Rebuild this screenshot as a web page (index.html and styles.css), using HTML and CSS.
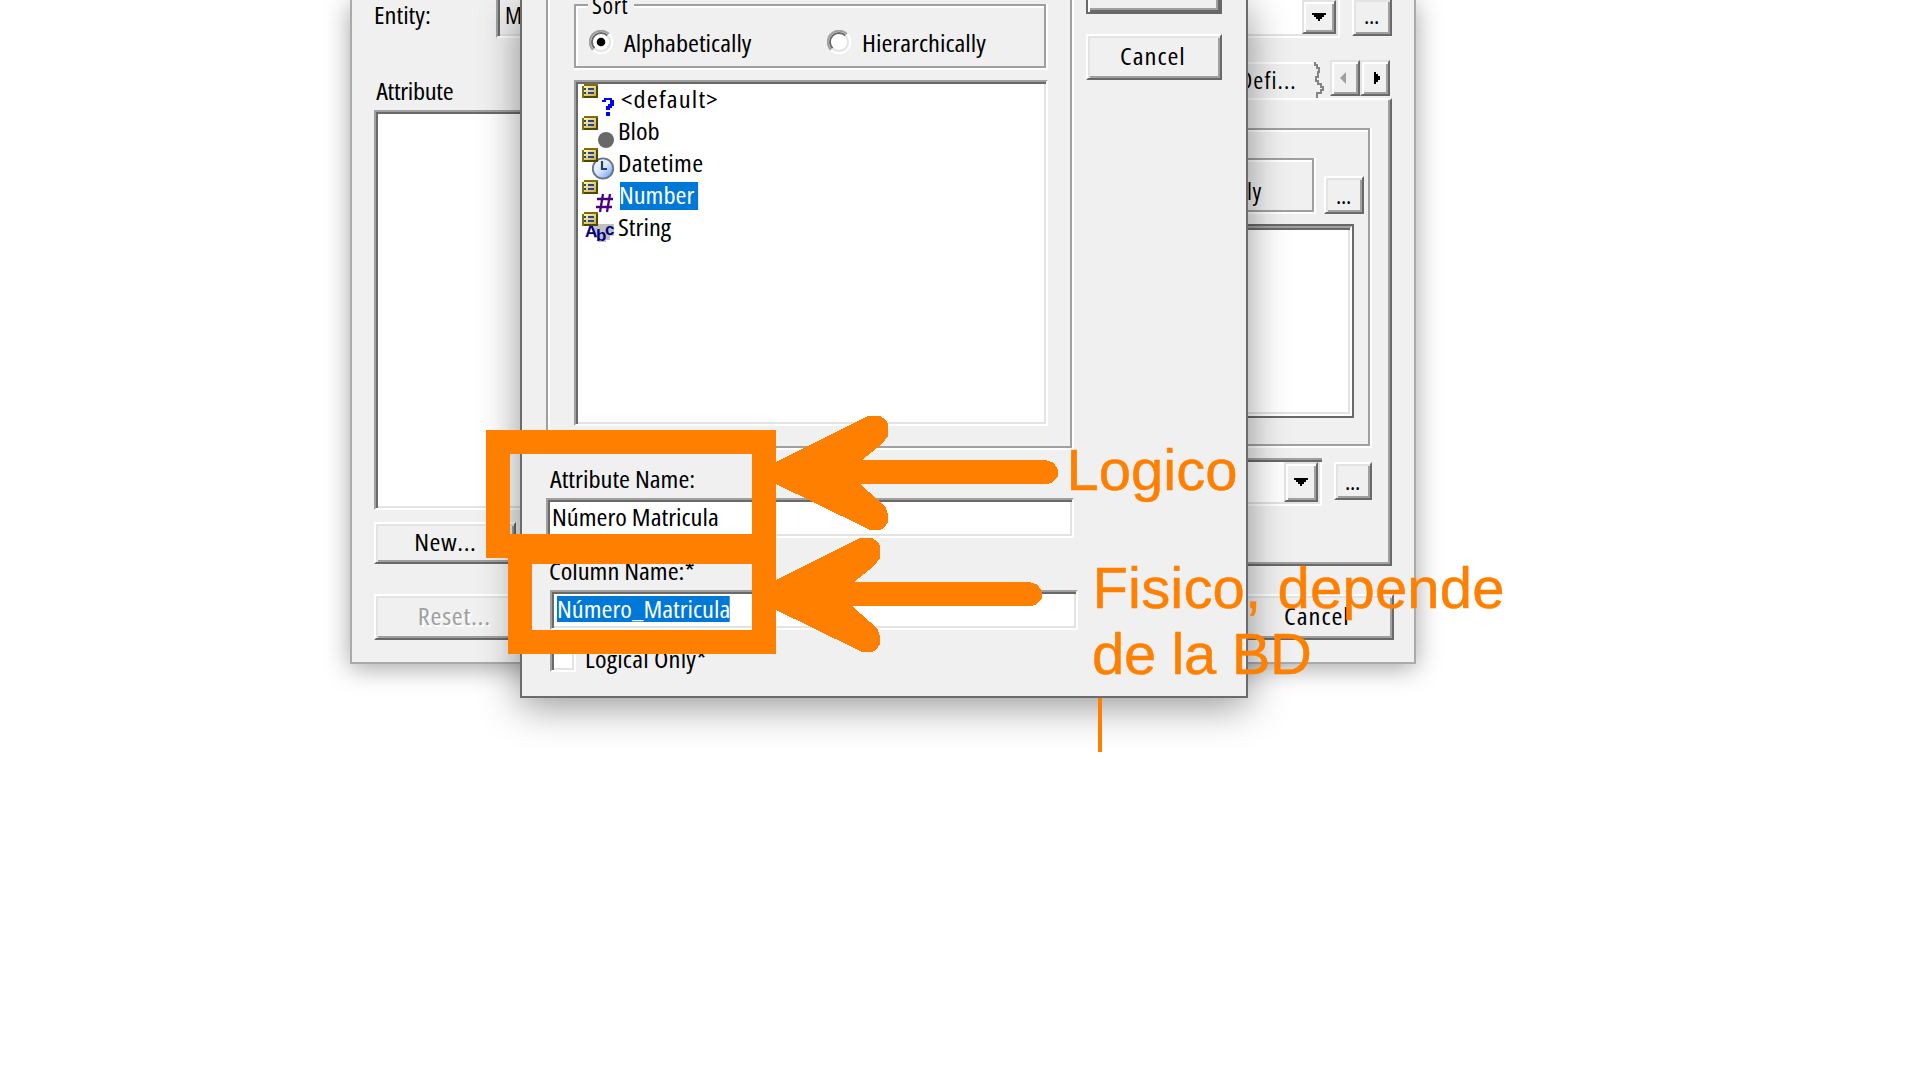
FILE: index.html
```html
<!DOCTYPE html>
<html lang="en">
<head>
<meta charset="utf-8">
<title>Attribute dialog</title>
<link rel="stylesheet" href="styles.css">
</head>
<body>
<svg class="defs" width="0" height="0">
  <defs>
    <linearGradient id="tag" x1="0" y1="0" x2="1" y2="1"><stop offset="0" stop-color="#fff8c0"/><stop offset="1" stop-color="#c8b040"/></linearGradient>
    <linearGradient id="glass" x1="0" y1="0" x2="1" y2="1"><stop offset="0" stop-color="#ffffff"/><stop offset=".5" stop-color="#d8e6fa"/><stop offset="1" stop-color="#5b92ee"/></linearGradient>
    <symbol id="domain" viewBox="0 0 16 14">
      <path d="M2 0H16V14H0V2H2Z" fill="#807000"/><path d="M14 2H16V14H2V12H14Z" fill="#504800"/>
      <rect x="2" y="2" width="12" height="10" fill="url(#tag)"/>
      <path d="M2 4h2v2H2zM6 4h6v2H6zM2 8h2v2H2zM6 8h6v2H6z" fill="#2840a8"/>
    </symbol>
  </defs>
</svg>

<div class="desktop">
  <section class="window entity-window">
    <div class="left-column">
      <div class="entity-row"><label>Entity:</label><div class="entity-field">M</div></div>
      <label class="attribute-label">Attribute</label>
      <div class="sunken attribute-list"></div>
      <button class="button new-button"><span>New...</span></button>
      <button class="button reset-button"><span>Reset...</span></button>
    </div>
    <div class="right-column">
      <div class="entity-combo-row">
        <div class="combo combo-cut"><span class="drop"><svg width="14" height="8" shape-rendering="crispEdges"><path d="M0 0H14V2H12V4H10V6H8V8H6V6H4V4H2V2H0Z"/></svg></span></div>
        <button class="button dots dots-cut">...</button>
      </div>
      <div class="tabs">
        <div class="tab">Defi...</div>
        <svg class="tear" width="12" height="36" shape-rendering="crispEdges"><path d="M1 0V3H3V6H5V10H4V15H2V19H4V22H7V25H9V28H7V31H3V36" fill="none" stroke="#848484" stroke-width="2"/></svg>
        <span class="button arrow back"><svg width="6" height="12" viewBox="0 0 6 12"><path d="M6 0V12L0 6Z" fill="#a0a0a0"/></svg></span>
        <span class="button arrow next"><svg width="6" height="12" viewBox="0 0 6 12" shape-rendering="crispEdges"><path d="M0 0H2V2H4V4H6V8H4V10H2V12H0Z"/></svg></span>
      </div>
      <div class="page">
        <div class="page-group">
          <div class="sort-row"><div class="sort-cut">ly</div><button class="button dots">...</button></div>
          <div class="list-frame"><div class="sunken page-list"></div></div>
        </div>
        <div class="page-combo-row">
          <div class="combo"><span class="drop"><svg width="14" height="8" shape-rendering="crispEdges"><path d="M0 0H14V2H12V4H10V6H8V8H6V6H4V4H2V2H0Z"/></svg></span></div>
          <button class="button dots">...</button>
        </div>
      </div>
      <button class="button back-cancel"><span>Cancel</span></button>
    </div>
  </section>

  <section class="window attribute-window">
    <div class="upper">
      <div class="domain-group">
        <fieldset class="sort">
          <legend>Sort</legend>
          <svg class="radio" width="24" height="24"><circle cx="12" cy="12" r="10" fill="#fff"/><path d="M4 20A11 11 0 0 1 20 4" fill="none" stroke="#a0a0a0" stroke-width="2"/><path d="M5.600 18.400A9 9 0 0 1 18.400 5.600" fill="none" stroke="#696969" stroke-width="2"/><path d="M20 4A11 11 0 0 1 4 20" fill="none" stroke="#fff" stroke-width="2"/><path d="M18.400 5.600A9 9 0 0 1 5.600 18.400" fill="none" stroke="#e3e3e3" stroke-width="2"/><circle cx="12" cy="12" r="4.300"/></svg>
          <label class="alpha">Alphabetically</label>
          <svg class="radio" width="24" height="24"><circle cx="12" cy="12" r="10" fill="#fff"/><path d="M4 20A11 11 0 0 1 20 4" fill="none" stroke="#a0a0a0" stroke-width="2"/><path d="M5.600 18.400A9 9 0 0 1 18.400 5.600" fill="none" stroke="#696969" stroke-width="2"/><path d="M20 4A11 11 0 0 1 4 20" fill="none" stroke="#fff" stroke-width="2"/><path d="M18.400 5.600A9 9 0 0 1 5.600 18.400" fill="none" stroke="#e3e3e3" stroke-width="2"/></svg>
          <label>Hierarchically</label>
        </fieldset>
        <ul class="sunken domains">
          <li class="default"><svg width="34" height="34"><use href="#domain" width="16" height="14"/><path d="M22 14H30V16H32V22H30V24H28V26H24V22H26V20H28V16H24V18H20V16H22ZM24 28H28V32H24Z" fill="#00f" shape-rendering="crispEdges"/></svg><span>&lt;default&gt;</span></li>
          <li><svg width="34" height="34"><use href="#domain" width="16" height="14"/><circle cx="24" cy="24" r="8" fill="#696969"/></svg><span>Blob</span></li>
          <li class="datetime"><svg width="34" height="34"><circle cx="21" cy="20.500" r="10.200" fill="url(#glass)" stroke="#667388" stroke-width="1.800"/><path d="M20 13V21H25" fill="none" stroke="#2b3f66" stroke-width="2.200"/><use href="#domain" width="16" height="14"/></svg><span>Datetime</span></li>
          <li><svg width="34" height="34"><use href="#domain" width="16" height="14"/><path d="M21 14L18 32M28 14L25 32M15 19H31M14 27H30" fill="none" stroke="#4b0082" stroke-width="2.300"/></svg><span class="selected">Number</span></li>
          <li><svg width="34" height="34"><path d="M12 12H32V24H28V28H24V30H16V26H12Z" fill="#c0c0c0"/><text class="abc" x="3" y="25">A</text><text class="abc" x="14" y="29">b</text><text class="abc" x="23" y="23">c</text><use href="#domain" width="16" height="14"/></svg><span>String</span></li>
        </ul>
      </div>
      <div class="actions">
        <button class="button ok"></button>
        <button class="button cancel"><span>Cancel</span></button>
      </div>
    </div>
    <div class="field-label"><label>Attribute Name:</label></div>
    <div class="sunken field"><span>Número Matricula</span></div>
    <div class="field-label column-label"><label>Column Name:*</label></div>
    <div class="sunken field column-field"><span>Número_Matricula</span></div>
    <div class="logical"><span class="sunken check"></span><label>Logical Only*</label></div>
  </section>

  <svg class="annotations" width="1920" height="1080" shape-rendering="crispEdges">
    <g fill="none" stroke="#ff8000" stroke-width="24">
      <rect x="498" y="442" width="266" height="104"/>
      <rect x="520" y="552" width="244" height="90"/>
    </g>
    <g fill="#ff8000">
      <path d="M774 463L868 416H880L886 420L888 424V436L882 444L862 460H1046L1054 463L1058 470V476L1052 483L1046 484H860L878 500L886 508L888 514V522L884 528L880 530H870L864 527L774 483Z"/>
      <path d="M774 581L860 538H872L878 542L880 546V558L874 566L854 582H1030L1038 585L1042 592V598L1036 605L1030 606H852L870 622L878 630L880 636V644L876 650L872 652H862L856 649L774 609Z"/>
      <rect x="1098" y="698" width="4" height="54"/>
      <text x="1066.500" y="490" textLength="171">Logico</text>
      <text x="1092.500" y="608" textLength="412">Fisico, depende</text>
      <text x="1092" y="674" textLength="220">de la BD</text>
    </g>
  </svg>
</div>
</body>
</html>
```
FILE: styles.css
```css
* { box-sizing: border-box; }
body {
  margin: 0;
  background: #fff;
  color: #000;
  font: 24px/30px "Open Sans", "Noto Sans", sans-serif;
  font-stretch: 75%;
}
.defs { position: absolute; }
.desktop { position: relative; width: 1920px; height: 1080px; overflow: hidden; }
label, li, button, .field { white-space: nowrap; }

/* The condensed face is a little narrower than the dialog font, so labels are widened */
label, .domains span, .field span { display: inline-block; transform: scaleX(1.1); transform-origin: 0 0; }
.button > span { display: inline-block; transform: scaleX(1.1); }

.window {
  position: absolute;
  top: 0;
  background: #f0f0f0;
  border: 2px solid #aaa;
  border-top: 0;
}
.entity-window {
  left: 350px;
  width: 1066px;
  height: 664px;
  display: flex;
  justify-content: space-between;
  box-shadow: 0 4px 24px rgba(0, 0, 0, .36);
}
.attribute-window {
  left: 520px;
  width: 728px;
  height: 698px;
  border-color: #6c6c6c;
  padding-left: 24px;
  box-shadow: 0 8px 38px rgba(0, 0, 0, .42);
}

.sunken {
  background: #fff;
  border: 2px solid;
  border-color: #a0a0a0 #fff #fff #a0a0a0;
  box-shadow: inset 2px 2px #696969, inset -2px -2px #e3e3e3;
}
.button {
  display: flex;
  align-items: center;
  justify-content: center;
  padding: 0 0 3px;
  font: inherit;
  color: #000;
  background: #f0f0f0;
  border: 2px solid;
  border-color: #fff #696969 #696969 #fff;
  box-shadow: inset 2px 2px #e3e3e3, inset -2px -2px #a0a0a0;
}

/* Entity window */
.left-column { width: 168px; padding-left: 22px; display: flex; flex-direction: column; }
.entity-row { display: flex; justify-content: space-between; height: 38px; }
.entity-field {
  width: 24px;
  padding-left: 7px;
  overflow: hidden;
  border-left: 2px solid #a0a0a0;
  border-bottom: 2px solid #fff;
  box-shadow: inset 2px 0 #696969, inset 0 -2px #e3e3e3;
}
.attribute-label { width: 100px; height: 72px; padding: 38px 0 0 2px; letter-spacing: -.3px; }
.attribute-list { height: 400px; border-right: 0; box-shadow: inset 2px 2px #696969, inset 0 -2px #e3e3e3; }
.new-button { width: 142px; height: 42px; margin-top: 12px; letter-spacing: .5px; }
.reset-button { width: 160px; height: 46px; margin-top: 30px; color: #a0a0a0; text-shadow: 2px 2px #fff; letter-spacing: .7px; }

.right-column { width: 174px; display: flex; flex-direction: column; }
.entity-combo-row, .page-combo-row { display: flex; }
.combo {
  width: 100px;
  height: 48px;
  display: flex;
  justify-content: flex-end;
  padding: 2px 4px 4px 0;
  background: #fff;
  border-top: 2px solid #a0a0a0;
  box-shadow: inset 0 2px #696969, inset -2px -2px #fff, inset -4px -4px #e3e3e3;
}
.drop {
  width: 34px;
  display: flex;
  align-items: center;
  justify-content: center;
  background: #f0f0f0;
  border: 2px solid;
  border-color: #e3e3e3 #696969 #696969 #e3e3e3;
  box-shadow: inset 2px 2px #fff, inset -2px -2px #a0a0a0;
}
.combo-cut { height: 38px; padding-top: 0; border-top: 0; box-shadow: inset -2px -2px #fff, inset -4px -4px #e3e3e3; }
.dots { height: 38px; width: 40px; padding: 0 1px 0 0; letter-spacing: -.3px; }
.dots-cut { height: 36px; margin-left: 12px; border-top: 0; padding-bottom: 5px; }
.tabs { display: flex; height: 60px; padding-top: 22px; }
.tab { flex: none; width: 74px; height: 38px; margin-top: 2px; padding: 1px 0 0; border-top: 2px solid #fff; letter-spacing: 1.100px; }
.tear { margin: 2px 2px 0 0; flex: none; }
.arrow { width: 30px; height: 36px; flex: none; padding: 0; border-color: #e3e3e3 #696969 #696969 #e3e3e3; box-shadow: inset 2px 2px #fff, inset -2px -2px #a0a0a0; }
.back { margin-left: 2px; padding-right: 4px; }
.next { padding-left: 4px; }
.page {
  width: 152px;
  height: 468px;
  padding-top: 28px;
  border: solid;
  border-width: 2px 2px 2px 0;
  border-color: #fff #696969 #696969;
  box-shadow: inset -2px -2px #a0a0a0;
}
.page-group {
  width: 132px;
  height: 320px;
  padding-top: 30px;
  border: solid #fff;
  border-width: 0 2px 2px 0;
  box-shadow: inset -2px -2px #a0a0a0, inset 0 2px #a0a0a0, inset 0 4px #fff;
}
.sort-row { display: flex; align-items: flex-end; gap: 8px; height: 56px; }
.sort-cut {
  width: 76px;
  height: 56px;
  padding: 18px 0 0 7px;
  letter-spacing: .5px;
  border: solid #fff;
  border-width: 0 2px 2px 0;
  box-shadow: inset -2px -2px #a0a0a0, inset 0 2px #a0a0a0, inset 0 4px #fff;
}
.list-frame { width: 114px; height: 194px; margin-top: 10px; border: 2px solid #696969; border-left: 0; }
.page-list { height: 100%; border-left: 0; }
.page-combo-row { margin-top: 10px; gap: 12px; }
.page-combo-row .combo { width: 82px; }
.page-combo-row .dots { width: 38px; margin-top: 4px; }
.back-cancel { width: 154px; height: 46px; margin-top: 28px; padding-right: 0; letter-spacing: .9px; }

/* Attribute window */
.upper { display: flex; }
.domain-group {
  width: 528px;
  height: 450px;
  padding: 4px 0 0 28px;
  border: solid #fff;
  border-width: 0 2px 2px 0;
  box-shadow: inset 2px 0 #a0a0a0, inset 4px 0 #fff, inset -2px -2px #a0a0a0;
}
.sort {
  position: relative;
  display: flex;
  width: 472px;
  height: 64px;
  margin: 0;
  padding: 24px 0 0 12px;
  border: 2px solid #a0a0a0;
  box-shadow: inset 2px 2px #fff, 0 2px #fff, 2px 0 #fff, 2px 2px #fff;
}
.sort legend {
  position: absolute;
  left: 12px;
  top: -16px;
  width: 46px;
  padding: 0 0 0 4px;
  letter-spacing: .6px;
  background: #f0f0f0;
}
.radio { flex: none; margin: 0 11px 0 1px; }
.sort label { margin-top: -2px; }
.alpha { width: 202px; }
.domains { width: 474px; height: 346px; margin: 12px 0 0; padding: 2px 0 0 6px; list-style: none; }
.domains li { display: flex; align-items: flex-start; height: 32px; }
.domains svg { flex: none; margin-right: 2px; overflow: visible; }
.domains span { height: 28px; line-height: 30px; padding: 0; }
.domains .default span { margin-left: 3px; letter-spacing: 1.100px; }
.domains .datetime span { letter-spacing: .3px; }
.domains .selected { width: 71px; background: #0078d7; color: #fff; margin: 2px 0 0 2px; line-height: 26px; text-indent: -1px; }
.abc { font: bold 17px "Liberation Sans", sans-serif; fill: #000080; }
.actions { padding-left: 12px; }
.actions .button { width: 136px; }
.ok { height: 14px; padding: 0; border: 2px solid #696969; border-top: 0; box-shadow: inset 2px 0 #fff, inset -2px -2px #696969, inset -4px -4px #a0a0a0; }
.actions .cancel { height: 46px; margin-top: 20px; padding-right: 3px; letter-spacing: .9px; }
.field-label { height: 48px; padding: 14px 0 0 4px; }
.field { width: 528px; height: 40px; padding: 2px 0 0 4px; }
.column-label { height: 52px; padding: 18px 0 0 3px; }
.column-field { margin-left: 4px; padding: 4px 0 0 5px; }
.column-field span { display: block; width: 157px; height: 26px; line-height: 26px; background: #0078d7; color: #fff; }
.logical { display: flex; margin: 16px 0 0 4px; }
.check { width: 26px; height: 26px; }
.logical label { margin: -2px 0 0 9px; letter-spacing: .2px; }

/* Hand-drawn notes over the windows */
.annotations { position: absolute; inset: 0; }
.annotations text { font: 58px "Liberation Sans", Arial, sans-serif; stroke: #ff8000; stroke-width: .5px; }
```
